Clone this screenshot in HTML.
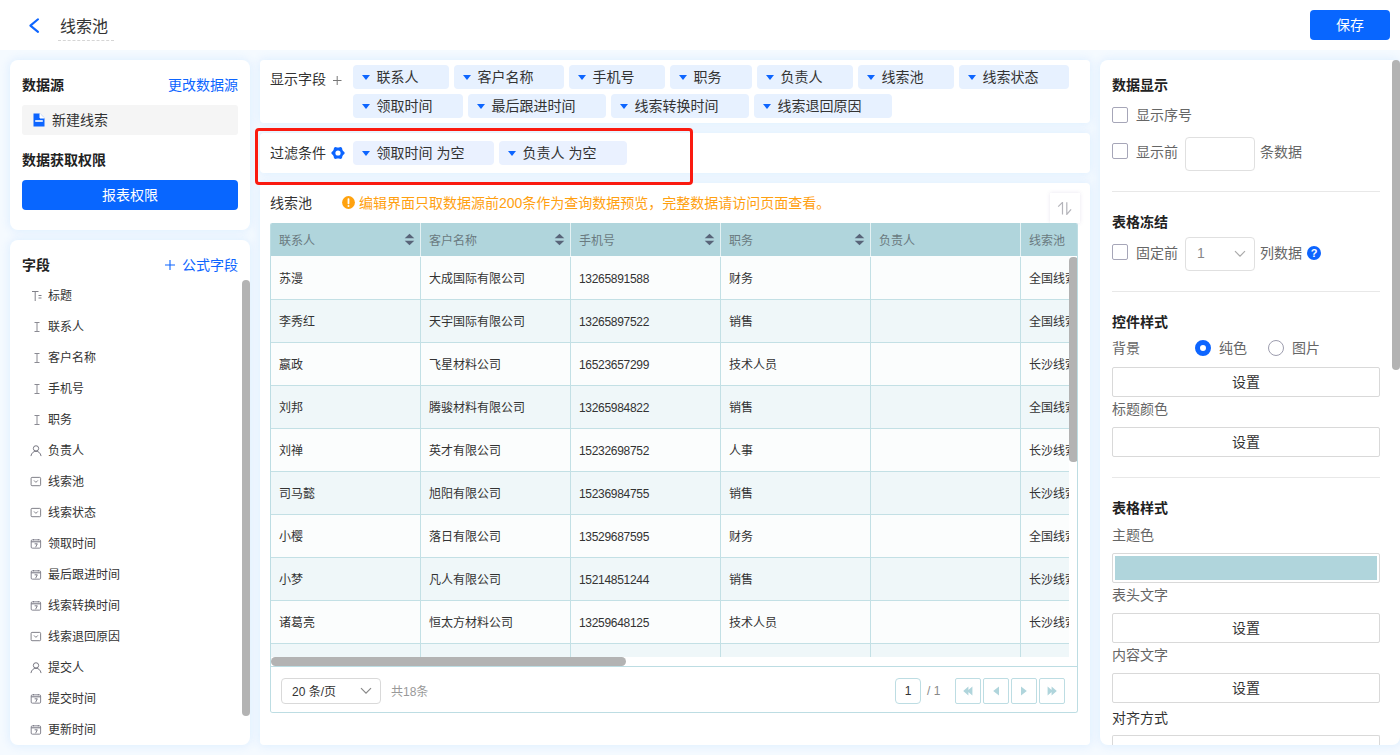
<!DOCTYPE html>
<html lang="zh-CN">
<head>
<meta charset="utf-8">
<title>线索池</title>
<style>
*{box-sizing:border-box;margin:0;padding:0}
html,body{width:1400px;height:755px;overflow:hidden}
body{background:#f5faff;font-family:"Liberation Sans","Noto Sans CJK SC",sans-serif;font-size:14px;color:#333;position:relative}
.abs{position:absolute}
.hdr{position:absolute;left:0;top:0;width:1400px;height:50px;background:#fff}
.panel{position:absolute;background:#fff;border-radius:8px;box-shadow:0 0 9px 1px rgba(196,226,255,.48)}
.t{position:absolute;white-space:nowrap;line-height:20px;height:20px}
.b{font-weight:bold;color:#222}
.blue{color:#0d65ff}
.btn-blue{position:absolute;background:#0866ff;color:#fff;border-radius:4px;text-align:center}
.fld{position:absolute;left:48px;font-size:12px;line-height:18px;height:18px;color:#333;white-space:nowrap}
.fic{position:absolute;left:31px;width:12px;height:12px}
.tag{position:absolute;height:24px;background:#e7f1ff;border-radius:4px;font-size:14px;line-height:24px;color:#333;white-space:nowrap;padding-left:23.500px}
.tag:before{content:"";position:absolute;left:8.500px;top:9.700px;border-left:4.500px solid transparent;border-right:4.500px solid transparent;border-top:5px solid #0d65ff}
.tag2{background:#eaf1ff}

.tbl{position:absolute;left:270px;top:223px;width:808px;height:490px;border:1px solid #bddde3;border-top:none;overflow:hidden;border-radius:2px 2px 3px 3px}
.th{position:absolute;top:0;height:33px;background:#b0d5dc;color:#6a7a80;font-size:12px;line-height:37px;padding-left:8px;border-left:1px solid #e6f2f4;white-space:nowrap}
.srt{position:absolute;right:5px;top:10px;width:11px;height:13px}
.row{position:absolute;left:0;width:799px;height:43px;border-top:1px solid #c3e0e5}
.row.o{background:#fbfdfd}
.row.e{background:#eff7f9}
.td{position:absolute;top:0;height:42px;line-height:45px;font-size:12px;color:#333;padding-left:8px;border-left:1px solid #c3e0e5;white-space:nowrap;overflow:hidden}
.num{letter-spacing:-0.3px}

.g{color:#666}
.cb{position:absolute;left:1112px;width:16px;height:16px;border:1px solid #a6a6b8;border-radius:2px;background:#fff}
.hr{position:absolute;left:1112px;width:268px;height:1px;background:#e8e8e8}
.sbtn{position:absolute;left:1112px;width:268px;height:30px;border:1px solid #d9d9d9;border-radius:2px;background:#fff;text-align:center;line-height:28px;font-size:14px;color:#333}
.inp{position:absolute;left:1185px;width:70px;height:34px;border:1px solid #e0e0e0;border-radius:4px;background:#fff}
</style>
</head>
<body>
<!-- header -->
<div class="hdr">
  <svg class="abs" style="left:27px;top:15px" width="16" height="20" viewBox="0 0 16 20"><path d="M11 4.300 L3.400 10.600 L11 16.900" fill="none" stroke="#0d65ff" stroke-width="2.100" stroke-linecap="round" stroke-linejoin="round"/></svg>
  <div class="t" style="left:60px;top:16px;font-size:16px;line-height:22px;height:22px;color:#333">线索池</div>
  <div class="abs" style="left:58px;top:40px;width:56px;height:0;border-top:1px dashed #d5d5d5"></div>
  <div class="btn-blue" style="left:1310px;top:10px;width:80px;height:30px;line-height:30px;font-size:14px">保存</div>
</div>

<!-- left panel 1 -->
<div class="panel" style="left:10px;top:60px;width:240px;height:170px"></div>
<div class="t b" style="left:22px;top:75px">数据源</div>
<div class="t blue" style="left:168px;top:75px">更改数据源</div>
<div class="abs" style="left:22px;top:105px;width:216px;height:30px;background:#f5f5f5;border-radius:3px"></div>
<svg class="abs" style="left:33px;top:113px" width="12" height="14" viewBox="0 0 12 14"><path d="M0.5 0.5h6.5l4.5 4.5v8.5h-11z" fill="#0d65ff"/><path d="M7 0.5v4.5h4.5" fill="#fff" stroke="#fff" stroke-width="1"/><rect x="2.2" y="7.2" width="7.6" height="1.6" fill="#fff"/></svg>
<div class="t" style="left:52px;top:110px">新建线索</div>
<div class="t b" style="left:22px;top:150px">数据获取权限</div>
<div class="btn-blue" style="left:22px;top:180px;width:216px;height:30px;line-height:30px">报表权限</div>

<!-- left panel 2 -->
<div class="panel" style="left:10px;top:240px;width:240px;height:505px"></div>
<div class="t b" style="left:22px;top:255px">字段</div>
<svg class="abs" style="left:164px;top:259px" width="12" height="12" viewBox="0 0 12 12"><path d="M1 6h10M6 1v10" stroke="#0d65ff" stroke-width="1.100" fill="none"/></svg>
<div class="t blue" style="left:182px;top:254.500px">公式字段</div>
<div class="abs" style="left:242px;top:280px;width:8px;height:436px;background:#b3b3b3;border-radius:4px"></div>
<div id="fields">
<svg class="fic" style="top:290px" width="12" height="12" viewBox="0 0 12 12"><path d="M1 1.500h6.500M4.200 1.500v9.500M7.500 5.500h3M7.500 8h3" fill="none" stroke="#808088" stroke-width="1"/></svg>
<div class="fld" style="top:287px">标题</div>
<svg class="fic" style="top:321px" width="12" height="12" viewBox="0 0 12 12"><path d="M3.500 1.500h5M6 1.500v9M3.500 10.500h5" fill="none" stroke="#8a8a92" stroke-width="1"/></svg>
<div class="fld" style="top:318px">联系人</div>
<svg class="fic" style="top:352px" width="12" height="12" viewBox="0 0 12 12"><path d="M3.500 1.500h5M6 1.500v9M3.500 10.500h5" fill="none" stroke="#8a8a92" stroke-width="1"/></svg>
<div class="fld" style="top:349px">客户名称</div>
<svg class="fic" style="top:383px" width="12" height="12" viewBox="0 0 12 12"><path d="M3.500 1.500h5M6 1.500v9M3.500 10.500h5" fill="none" stroke="#8a8a92" stroke-width="1"/></svg>
<div class="fld" style="top:380px">手机号</div>
<svg class="fic" style="top:414px" width="12" height="12" viewBox="0 0 12 12"><path d="M3.500 1.500h5M6 1.500v9M3.500 10.500h5" fill="none" stroke="#8a8a92" stroke-width="1"/></svg>
<div class="fld" style="top:411px">职务</div>
<svg class="fic" style="top:445px;left:30px" width="13" height="12" viewBox="0 0 13 12"><circle cx="6.500" cy="3.200" r="2.900" fill="none" stroke="#6e6e78" stroke-width="1"/><path d="M1 11.500c.6-3.400 2.800-5.200 5.500-5.200s4.900 1.800 5.500 5.200" fill="none" stroke="#6e6e78" stroke-width="1"/></svg>
<div class="fld" style="top:442px">负责人</div>
<svg class="fic" style="top:476px;left:30px" width="13" height="12" viewBox="0 0 13 12"><rect x="1.200" y="1" width="10.300" height="9" rx="1" fill="none" stroke="#76767f" stroke-width="1"/><path d="M4.300 4.300l2.100 2.100 2.100-2.100" fill="none" stroke="#76767f" stroke-width="1"/></svg>
<div class="fld" style="top:473px">线索池</div>
<svg class="fic" style="top:507px;left:30px" width="13" height="12" viewBox="0 0 13 12"><rect x="1.200" y="1" width="10.300" height="9" rx="1" fill="none" stroke="#76767f" stroke-width="1"/><path d="M4.300 4.300l2.100 2.100 2.100-2.100" fill="none" stroke="#76767f" stroke-width="1"/></svg>
<div class="fld" style="top:504px">线索状态</div>
<svg class="fic" style="top:538px;left:30px" width="13" height="12" viewBox="0 0 13 12"><rect x="1.300" y="1.500" width="10.200" height="9" rx="1.200" fill="none" stroke="#7c7c88" stroke-width="1"/><path d="M1.300 3.600h10.200" fill="none" stroke="#7c7c88" stroke-width="1.200"/><path d="M3.800 0.600v1.400M9 0.600v1.400" fill="none" stroke="#7c7c88" stroke-width="1"/><path d="M5 5.800h2.900l-1.800 3.700" fill="none" stroke="#6c6c78" stroke-width="0.950"/></svg>
<div class="fld" style="top:535px">领取时间</div>
<svg class="fic" style="top:569px;left:30px" width="13" height="12" viewBox="0 0 13 12"><rect x="1.300" y="1.500" width="10.200" height="9" rx="1.200" fill="none" stroke="#7c7c88" stroke-width="1"/><path d="M1.300 3.600h10.200" fill="none" stroke="#7c7c88" stroke-width="1.200"/><path d="M3.800 0.600v1.400M9 0.600v1.400" fill="none" stroke="#7c7c88" stroke-width="1"/><path d="M5 5.800h2.900l-1.800 3.700" fill="none" stroke="#6c6c78" stroke-width="0.950"/></svg>
<div class="fld" style="top:566px">最后跟进时间</div>
<svg class="fic" style="top:600px;left:30px" width="13" height="12" viewBox="0 0 13 12"><rect x="1.300" y="1.500" width="10.200" height="9" rx="1.200" fill="none" stroke="#7c7c88" stroke-width="1"/><path d="M1.300 3.600h10.200" fill="none" stroke="#7c7c88" stroke-width="1.200"/><path d="M3.800 0.600v1.400M9 0.600v1.400" fill="none" stroke="#7c7c88" stroke-width="1"/><path d="M5 5.800h2.900l-1.800 3.700" fill="none" stroke="#6c6c78" stroke-width="0.950"/></svg>
<div class="fld" style="top:597px">线索转换时间</div>
<svg class="fic" style="top:631px;left:30px" width="13" height="12" viewBox="0 0 13 12"><rect x="1.200" y="1" width="10.300" height="9" rx="1" fill="none" stroke="#76767f" stroke-width="1"/><path d="M4.300 4.300l2.100 2.100 2.100-2.100" fill="none" stroke="#76767f" stroke-width="1"/></svg>
<div class="fld" style="top:628px">线索退回原因</div>
<svg class="fic" style="top:662px;left:30px" width="13" height="12" viewBox="0 0 13 12"><circle cx="6.500" cy="3.200" r="2.900" fill="none" stroke="#6e6e78" stroke-width="1"/><path d="M1 11.500c.6-3.400 2.800-5.200 5.500-5.200s4.900 1.800 5.500 5.200" fill="none" stroke="#6e6e78" stroke-width="1"/></svg>
<div class="fld" style="top:659px">提交人</div>
<svg class="fic" style="top:693px;left:30px" width="13" height="12" viewBox="0 0 13 12"><rect x="1.300" y="1.500" width="10.200" height="9" rx="1.200" fill="none" stroke="#7c7c88" stroke-width="1"/><path d="M1.300 3.600h10.200" fill="none" stroke="#7c7c88" stroke-width="1.200"/><path d="M3.800 0.600v1.400M9 0.600v1.400" fill="none" stroke="#7c7c88" stroke-width="1"/><path d="M5 5.800h2.900l-1.800 3.700" fill="none" stroke="#6c6c78" stroke-width="0.950"/></svg>
<div class="fld" style="top:690px">提交时间</div>
<svg class="fic" style="top:724px;left:30px" width="13" height="12" viewBox="0 0 13 12"><rect x="1.300" y="1.500" width="10.200" height="9" rx="1.200" fill="none" stroke="#7c7c88" stroke-width="1"/><path d="M1.300 3.600h10.200" fill="none" stroke="#7c7c88" stroke-width="1.200"/><path d="M3.800 0.600v1.400M9 0.600v1.400" fill="none" stroke="#7c7c88" stroke-width="1"/><path d="M5 5.800h2.900l-1.800 3.700" fill="none" stroke="#6c6c78" stroke-width="0.950"/></svg>
<div class="fld" style="top:721px">更新时间</div>
</div><!--/fields-->

<!-- center panels -->
<div class="panel" style="left:260px;top:60px;width:830px;height:63px;border-radius:4px"></div>
<div class="panel" style="left:260px;top:133px;width:830px;height:40px;border-radius:4px"></div>
<div class="panel" style="left:260px;top:183px;width:830px;height:562px;border-radius:4px"></div>

<!-- center top -->
<div class="t" style="left:270px;top:69px">显示字段</div>
<svg class="abs" style="left:332px;top:75px" width="11" height="11" viewBox="0 0 11 11"><path d="M1 5.500h8.500M5.200 1v9" stroke="#777" stroke-width="1" fill="none"/></svg>
<div class="tag" style="left:353px;top:65px;width:96px">联系人</div>
<div class="tag" style="left:454px;top:65px;width:110px">客户名称</div>
<div class="tag" style="left:569px;top:65px;width:96px">手机号</div>
<div class="tag" style="left:670px;top:65px;width:82px">职务</div>
<div class="tag" style="left:757px;top:65px;width:96px">负责人</div>
<div class="tag" style="left:858px;top:65px;width:96px">线索池</div>
<div class="tag" style="left:959px;top:65px;width:110px">线索状态</div>
<div class="tag" style="left:353px;top:94px;width:110px">领取时间</div>
<div class="tag" style="left:468px;top:94px;width:138px">最后跟进时间</div>
<div class="tag" style="left:611px;top:94px;width:138px">线索转换时间</div>
<div class="tag" style="left:754px;top:94px;width:138px">线索退回原因</div>
<div class="t" style="left:270px;top:143px">过滤条件</div>
<svg class="abs" style="left:330.500px;top:146px" width="14" height="14" viewBox="0 0 14 14"><path d="M11.27 5.28 L12.69 6.60 L12.69 7.40 L11.27 8.72 L10.62 9.83 L10.19 11.73 L9.50 12.12 L7.64 11.56 L6.36 11.56 L4.50 12.12 L3.81 11.73 L3.38 9.83 L2.73 8.72 L1.31 7.40 L1.31 6.60 L2.73 5.28 L3.38 4.17 L3.81 2.27 L4.50 1.88 L6.36 2.44 L7.64 2.44 L9.50 1.88 L10.19 2.27 L10.62 4.17z" fill="#0d65ff" stroke="#0d65ff" stroke-width="1.700" stroke-linejoin="round"/><circle cx="7" cy="7" r="2.600" fill="#fff"/></svg>
<div class="tag tag2" style="left:353px;top:141px;width:141px">领取时间 为空</div>
<div class="tag tag2" style="left:499px;top:141px;width:128px">负责人 为空</div>
<div class="abs" style="left:255px;top:128px;width:438px;height:57px;border:3px solid #fa1a10;border-radius:4px"></div>
<!-- /center top -->

<!-- table -->
<div class="t" style="left:270px;top:193px">线索池</div>
<svg class="abs" style="left:341.800px;top:196px" width="13" height="13" viewBox="0 0 13 13"><circle cx="6.500" cy="6.500" r="6.400" fill="#ffa20e"/><rect x="5.600" y="2.200" width="1.800" height="6" rx=".7" fill="#fff"/><circle cx="6.500" cy="10.100" r="1" fill="#fff"/></svg>
<div class="t" style="left:359px;top:193px;color:#ffa010">编辑界面只取数据源前200条作为查询数据预览，完整数据请访问页面查看。</div>
<div class="abs" style="left:1050px;top:193px;width:30px;height:30px;background:#fff;box-shadow:0 0 4px rgba(120,100,160,.16)"></div>
<svg class="abs" style="left:1057px;top:202px" width="16" height="13" viewBox="0 0 16 13"><path d="M1.200 4.600L5.500 0.400V12.500M9.800 0.300V12.400L14.100 7.300" fill="none" stroke="#b4b4ba" stroke-width="1.200"/></svg>
<div class="tbl">
<div class="th" style="left:0px;width:149px;border-left:none;padding-left:8px">联系人<svg class="srt" viewBox="0 0 11 13"><path d="M5.500 0.700L10.300 5.300H0.700z M5.500 12.300L0.700 7.700H10.300z" fill="#596479"/></svg></div>
<div class="th" style="left:149px;width:150px">客户名称<svg class="srt" viewBox="0 0 11 13"><path d="M5.500 0.700L10.300 5.300H0.700z M5.500 12.300L0.700 7.700H10.300z" fill="#596479"/></svg></div>
<div class="th" style="left:299px;width:150px">手机号<svg class="srt" viewBox="0 0 11 13"><path d="M5.500 0.700L10.300 5.300H0.700z M5.500 12.300L0.700 7.700H10.300z" fill="#596479"/></svg></div>
<div class="th" style="left:449px;width:150px">职务<svg class="srt" viewBox="0 0 11 13"><path d="M5.500 0.700L10.300 5.300H0.700z M5.500 12.300L0.700 7.700H10.300z" fill="#596479"/></svg></div>
<div class="th" style="left:599px;width:150px">负责人</div>
<div class="th" style="left:749px;width:60px">线索池</div>
<div class="row o" style="top:33px;border-top-color:transparent">
<div class="td" style="left:0px;width:149px;border-left:none;padding-left:8px">苏漫</div>
<div class="td" style="left:149px;width:150px">大成国际有限公司</div>
<div class="td num" style="left:299px;width:150px">13265891588</div>
<div class="td" style="left:449px;width:150px">财务</div>
<div class="td" style="left:599px;width:150px"></div>
<div class="td" style="left:749px;width:50px">全国线索池</div>
</div>
<div class="row e" style="top:76px">
<div class="td" style="left:0px;width:149px;border-left:none;padding-left:8px">李秀红</div>
<div class="td" style="left:149px;width:150px">天宇国际有限公司</div>
<div class="td num" style="left:299px;width:150px">13265897522</div>
<div class="td" style="left:449px;width:150px">销售</div>
<div class="td" style="left:599px;width:150px"></div>
<div class="td" style="left:749px;width:50px">全国线索池</div>
</div>
<div class="row o" style="top:119px">
<div class="td" style="left:0px;width:149px;border-left:none;padding-left:8px">嬴政</div>
<div class="td" style="left:149px;width:150px">飞星材料公司</div>
<div class="td num" style="left:299px;width:150px">16523657299</div>
<div class="td" style="left:449px;width:150px">技术人员</div>
<div class="td" style="left:599px;width:150px"></div>
<div class="td" style="left:749px;width:50px">长沙线索池</div>
</div>
<div class="row e" style="top:162px">
<div class="td" style="left:0px;width:149px;border-left:none;padding-left:8px">刘邦</div>
<div class="td" style="left:149px;width:150px">腾骏材料有限公司</div>
<div class="td num" style="left:299px;width:150px">13265984822</div>
<div class="td" style="left:449px;width:150px">销售</div>
<div class="td" style="left:599px;width:150px"></div>
<div class="td" style="left:749px;width:50px">全国线索池</div>
</div>
<div class="row o" style="top:205px">
<div class="td" style="left:0px;width:149px;border-left:none;padding-left:8px">刘禅</div>
<div class="td" style="left:149px;width:150px">英才有限公司</div>
<div class="td num" style="left:299px;width:150px">15232698752</div>
<div class="td" style="left:449px;width:150px">人事</div>
<div class="td" style="left:599px;width:150px"></div>
<div class="td" style="left:749px;width:50px">长沙线索池</div>
</div>
<div class="row e" style="top:248px">
<div class="td" style="left:0px;width:149px;border-left:none;padding-left:8px">司马懿</div>
<div class="td" style="left:149px;width:150px">旭阳有限公司</div>
<div class="td num" style="left:299px;width:150px">15236984755</div>
<div class="td" style="left:449px;width:150px">销售</div>
<div class="td" style="left:599px;width:150px"></div>
<div class="td" style="left:749px;width:50px">长沙线索池</div>
</div>
<div class="row o" style="top:291px">
<div class="td" style="left:0px;width:149px;border-left:none;padding-left:8px">小樱</div>
<div class="td" style="left:149px;width:150px">落日有限公司</div>
<div class="td num" style="left:299px;width:150px">13529687595</div>
<div class="td" style="left:449px;width:150px">财务</div>
<div class="td" style="left:599px;width:150px"></div>
<div class="td" style="left:749px;width:50px">全国线索池</div>
</div>
<div class="row e" style="top:334px">
<div class="td" style="left:0px;width:149px;border-left:none;padding-left:8px">小梦</div>
<div class="td" style="left:149px;width:150px">凡人有限公司</div>
<div class="td num" style="left:299px;width:150px">15214851244</div>
<div class="td" style="left:449px;width:150px">销售</div>
<div class="td" style="left:599px;width:150px"></div>
<div class="td" style="left:749px;width:50px">长沙线索池</div>
</div>
<div class="row o" style="top:377px">
<div class="td" style="left:0px;width:149px;border-left:none;padding-left:8px">诸葛亮</div>
<div class="td" style="left:149px;width:150px">恒太方材料公司</div>
<div class="td num" style="left:299px;width:150px">13259648125</div>
<div class="td" style="left:449px;width:150px">技术人员</div>
<div class="td" style="left:599px;width:150px"></div>
<div class="td" style="left:749px;width:50px">长沙线索池</div>
</div>
<div class="row e" style="top:420px">
<div class="td" style="left:0px;width:149px;border-left:none;padding-left:8px"></div>
<div class="td" style="left:149px;width:150px"></div>
<div class="td num" style="left:299px;width:150px"></div>
<div class="td" style="left:449px;width:150px"></div>
<div class="td" style="left:599px;width:150px"></div>
<div class="td" style="left:749px;width:50px"></div>
</div>
<div class="abs" style="left:0;top:434px;width:808px;height:56px;background:#fff"></div>
<div class="abs" style="left:798px;top:33px;width:10px;height:401px;background:#fff"></div>
<div class="abs" style="left:798px;top:34px;width:9px;height:205px;background:#b3b3b3;border-radius:4px"></div>
<div class="abs" style="left:0px;top:434px;width:355px;height:9px;background:#b3b3b3;border-radius:4.500px"></div>
<div class="abs" style="left:0;top:443px;width:808px;height:1px;background:#bddde3"></div>
<div class="abs" style="left:10px;top:455px;width:100px;height:26px;border:1px solid #d9d9d9;border-radius:4px;background:#fff"></div>
<div class="t" style="left:21px;top:459px;font-size:12px;color:#333">20 条/页</div>
<svg class="abs" style="left:89px;top:464px" width="12" height="8" viewBox="0 0 12 8"><path d="M1 1.200l5 5 5-5" fill="none" stroke="#888" stroke-width="1.200"/></svg>
<div class="t" style="left:120px;top:459px;font-size:12px;color:#999">共18条</div>
<div class="abs" style="left:624px;top:455px;width:26px;height:26px;border:1px solid #bddde3;border-radius:4px;background:#fff;text-align:center;line-height:24px;font-size:12px;color:#333">1</div>
<div class="t" style="left:656px;top:458px;font-size:12px;color:#888">/ 1</div>
<div class="abs" style="left:684px;top:455px;width:26px;height:26px;border:1px solid #bddde3;border-radius:2px;background:#fff"><svg style="position:absolute;left:0;top:0" width="24" height="24" viewBox="0 0 24 24" fill="#b0d5dc"><path d="M7.200 12L12.400 7.600V16.400z M11.200 12L16.400 7.600V16.400z"/></svg></div>
<div class="abs" style="left:712px;top:455px;width:26px;height:26px;border:1px solid #bddde3;border-radius:2px;background:#fff"><svg style="position:absolute;left:0;top:0" width="24" height="24" viewBox="0 0 24 24" fill="#b0d5dc"><path d="M9.200 12L15 7.600V16.400z"/></svg></div>
<div class="abs" style="left:740px;top:455px;width:26px;height:26px;border:1px solid #bddde3;border-radius:2px;background:#fff"><svg style="position:absolute;left:0;top:0" width="24" height="24" viewBox="0 0 24 24" fill="#b0d5dc"><path d="M14.800 12L9 7.600V16.400z"/></svg></div>
<div class="abs" style="left:768px;top:455px;width:26px;height:26px;border:1px solid #bddde3;border-radius:2px;background:#fff"><svg style="position:absolute;left:0;top:0" width="24" height="24" viewBox="0 0 24 24" fill="#b0d5dc"><path d="M16.800 12L11.600 7.600V16.400z M12.800 12L7.600 7.600V16.400z"/></svg></div>
</div>
<!-- /table -->

<!-- right panel -->
<div class="panel" style="left:1100px;top:60px;width:300px;height:685px"></div>

<!-- right content -->
<div class="t b" style="left:1112px;top:75px;">数据显示</div>
<div class="cb" style="top:107px"></div>
<div class="t g" style="left:1136px;top:105px;">显示序号</div>
<div class="cb" style="top:143px"></div>
<div class="t g" style="left:1136px;top:142px;">显示前</div>
<div class="inp" style="top:137px"></div>
<div class="t g" style="left:1260px;top:142px;">条数据</div>
<div class="hr" style="top:191px"></div>
<div class="t b" style="left:1112px;top:212px;">表格冻结</div>
<div class="cb" style="top:244px"></div>
<div class="t g" style="left:1136px;top:243px;">固定前</div>
<div class="inp" style="top:237px"></div>
<div class="t " style="left:1197px;top:243px;color:#888">1</div>
<svg class="abs" style="left:1234px;top:250px" width="12" height="8" viewBox="0 0 12 8"><path d="M1 1.200l5 5 5-5" fill="none" stroke="#aaa" stroke-width="1.200"/></svg>
<div class="t g" style="left:1260px;top:243px;">列数据</div>
<div class="abs" style="left:1307px;top:246px;width:14px;height:14px;border-radius:7px;background:#0d65ff;color:#fff;font-size:11px;font-weight:bold;line-height:14px;text-align:center">?</div>
<div class="hr" style="top:291px"></div>
<div class="t b" style="left:1112px;top:312px;">控件样式</div>
<div class="t g" style="left:1112px;top:338px;">背景</div>
<div class="abs" style="left:1195px;top:340px;width:16px;height:16px;border-radius:8px;border:5px solid #0d65ff;background:#fff"></div>
<div class="t g" style="left:1219px;top:338px;">纯色</div>
<div class="abs" style="left:1268px;top:340px;width:16px;height:16px;border-radius:8px;border:1px solid #9d9dae;background:#fff"></div>
<div class="t g" style="left:1292px;top:338px;">图片</div>
<div class="sbtn" style="top:367px">设置</div>
<div class="t g" style="left:1112px;top:399px;">标题颜色</div>
<div class="sbtn" style="top:427px">设置</div>
<div class="hr" style="top:477px"></div>
<div class="t b" style="left:1112px;top:498px;">表格样式</div>
<div class="t g" style="left:1112px;top:525px;">主题色</div>
<div class="abs" style="left:1112px;top:553px;width:268px;height:30px;border:1px solid #d9d9d9;border-radius:2px;background:#fff;padding:2px"><div style="width:100%;height:100%;background:#b0d5dc"></div></div>
<div class="t g" style="left:1112px;top:585px;">表头文字</div>
<div class="sbtn" style="top:613px">设置</div>
<div class="t g" style="left:1112px;top:645px;">内容文字</div>
<div class="sbtn" style="top:673px">设置</div>
<div class="t " style="left:1112px;top:708px;color:#333">对齐方式</div>
<div class="abs" style="left:1112px;top:735px;width:268px;height:10px;border:1px solid #d9d9d9;border-bottom:none;border-radius:2px 2px 0 0;background:#fff"></div>
<div class="abs" style="left:1392px;top:60px;width:8px;height:310px;background:#b3b3b3;border-radius:4px"></div>
<!-- /right content -->
</body>
</html>
